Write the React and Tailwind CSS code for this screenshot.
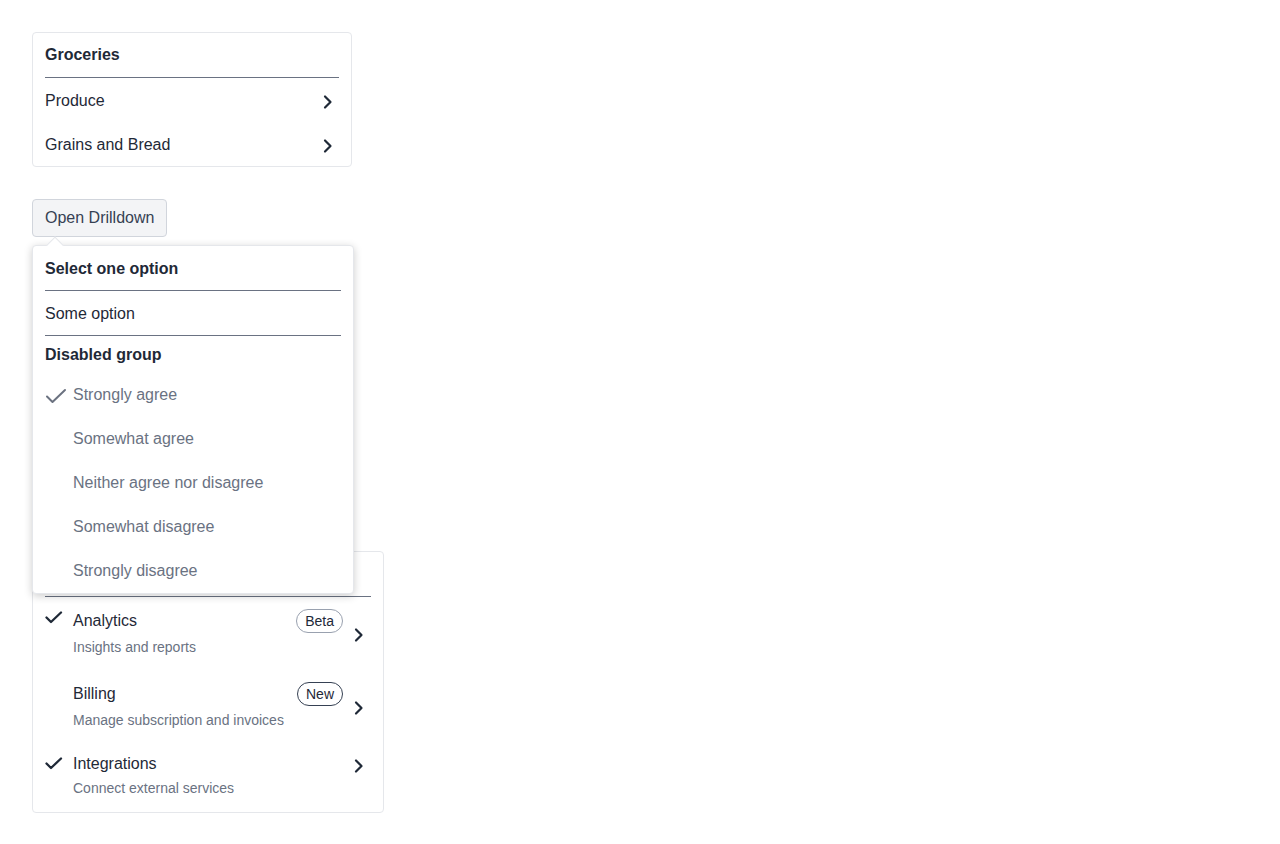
import React from 'react';

const font = { fontFamily: '"Liberation Sans", Arial, sans-serif' };

function Chevron() {
  return (
    <svg width="12" height="16" viewBox="0 0 12 16" fill="none" className="shrink-0">
      <path d="M3 2.5 L8.5 8 L3 13.5" stroke="#1f2937" strokeWidth="2.2" strokeLinecap="round" strokeLinejoin="round" />
    </svg>
  );
}

function ThinCheck() {
  return (
    <svg width="22" height="16" viewBox="0 0 22 16" fill="none">
      <path d="M2 8.5 L7.5 14 L20 2" stroke="#6b7280" strokeWidth="2" strokeLinecap="round" strokeLinejoin="round" />
    </svg>
  );
}

function BoldCheck() {
  return (
    <svg width="18" height="14" viewBox="0 0 18 14" fill="none">
      <path d="M1.5 6.5 L6 11 L16 1.5" stroke="#1f2937" strokeWidth="2.3" strokeLinecap="round" strokeLinejoin="round" />
    </svg>
  );
}

const disabledItems = [
  { label: 'Strongly agree', checked: true },
  { label: 'Somewhat agree' },
  { label: 'Neither agree nor disagree' },
  { label: 'Somewhat disagree' },
  { label: 'Strongly disagree' },
];

const features = [
  { title: 'Analytics', sub: 'Insights and reports', badge: 'Beta', checked: true, badgeBorder: 'border-gray-400' },
  { title: 'Billing', sub: 'Manage subscription and invoices', badge: 'New', badgeBorder: 'border-gray-700' },
  { title: 'Integrations', sub: 'Connect external services', checked: true },
];

export default function App() {
  return (
    <div className="min-h-screen bg-white p-8 text-[#1f2937]" style={font}>
      {/* Groceries drilldown */}
      <div className="w-[320px] rounded border border-gray-200 px-3 pt-[11px]">
        <div className="h-[33px] text-base font-bold leading-5 pt-[1px]">Groceries</div>
        <div className="border-t border-gray-500" />
        <div className="flex h-[44px] items-center justify-between pr-[5px] text-base">
          <span className="pt-[2px]">Produce</span>
          <span className="mt-[4px]"><Chevron /></span>
        </div>
        <div className="flex h-[44px] items-center justify-between pr-[5px] text-base">
          <span className="pt-[2px]">Grains and Bread</span>
          <span className="mt-[4px]"><Chevron /></span>
        </div>
      </div>

      {/* Open Drilldown + popover */}
      <div className="relative mt-8 h-[320px]">
        <button className="block h-[38px] rounded border border-gray-300 bg-gray-100 px-3 text-base text-gray-700">
          Open Drilldown
        </button>
        <div className="absolute left-0 top-[46px] z-10 w-[322px] rounded border border-gray-200 bg-white px-3 pt-[10px] pb-[1px] shadow-[0_2px_8px_rgba(0,0,0,0.2)]">
          <div className="absolute -top-[7px] left-[16px] h-3 w-3 rotate-45 border-l border-t border-gray-200 bg-white" />
          <div className="h-[34px] text-base font-bold leading-5 pt-[3px]">Select one option</div>
          <div className="border-t border-gray-500" />
          <div className="flex h-[44px] items-center text-base"><span className="pt-[2px]">Some option</span></div>
          <div className="border-t border-gray-500" />
          <div className="flex h-[36px] items-center text-base font-bold"><span className="pt-[2px]">Disabled group</span></div>
          {disabledItems.map((it) => (
            <div key={it.label} className="flex h-[44px] items-center text-base text-gray-500">
              <span className="flex w-[28px] shrink-0 items-center pt-[3px]">{it.checked && <ThinCheck />}</span>
              <span className="pt-[2px]">{it.label}</span>
            </div>
          ))}
        </div>
      </div>

      {/* Feature list (its header sits under the open popover) */}
      <div className="mt-8 w-[352px] rounded border border-gray-200 px-3 pt-[11px]">
        <div className="h-[33px]" />
        <div className="border-t border-gray-500" />
        <div className="flex flex-col">
          {features.map((f) => (
            <div key={f.title} className={`flex pt-[12px] ${f.badge ? 'items-center pb-[13px]' : 'items-start pb-[14px]'}`}>
              <span className="flex w-[28px] shrink-0 self-start pt-[2px]">{f.checked && <BoldCheck />}</span>
              <div className="flex flex-1 flex-col">
                <div className={`flex items-center justify-between ${f.badge ? 'h-[24px]' : 'h-[18px]'}`}>
                  <span className="text-base">{f.title}</span>
                  {f.badge && (
                    <span className={`rounded-full border ${f.badgeBorder} bg-white px-2 text-sm leading-[22px] text-gray-800`}>{f.badge}</span>
                  )}
                </div>
                <span className={`${f.badge ? 'mt-[4px]' : 'mt-[5px]'} text-sm leading-5 text-gray-500`}>{f.sub}</span>
              </div>
              <span className={`ml-[10px] pr-[6px] ${f.badge ? 'mt-[4px]' : 'mt-[3px]'}`}><Chevron /></span>
            </div>
          ))}
        </div>
      </div>
    </div>
  );
}
